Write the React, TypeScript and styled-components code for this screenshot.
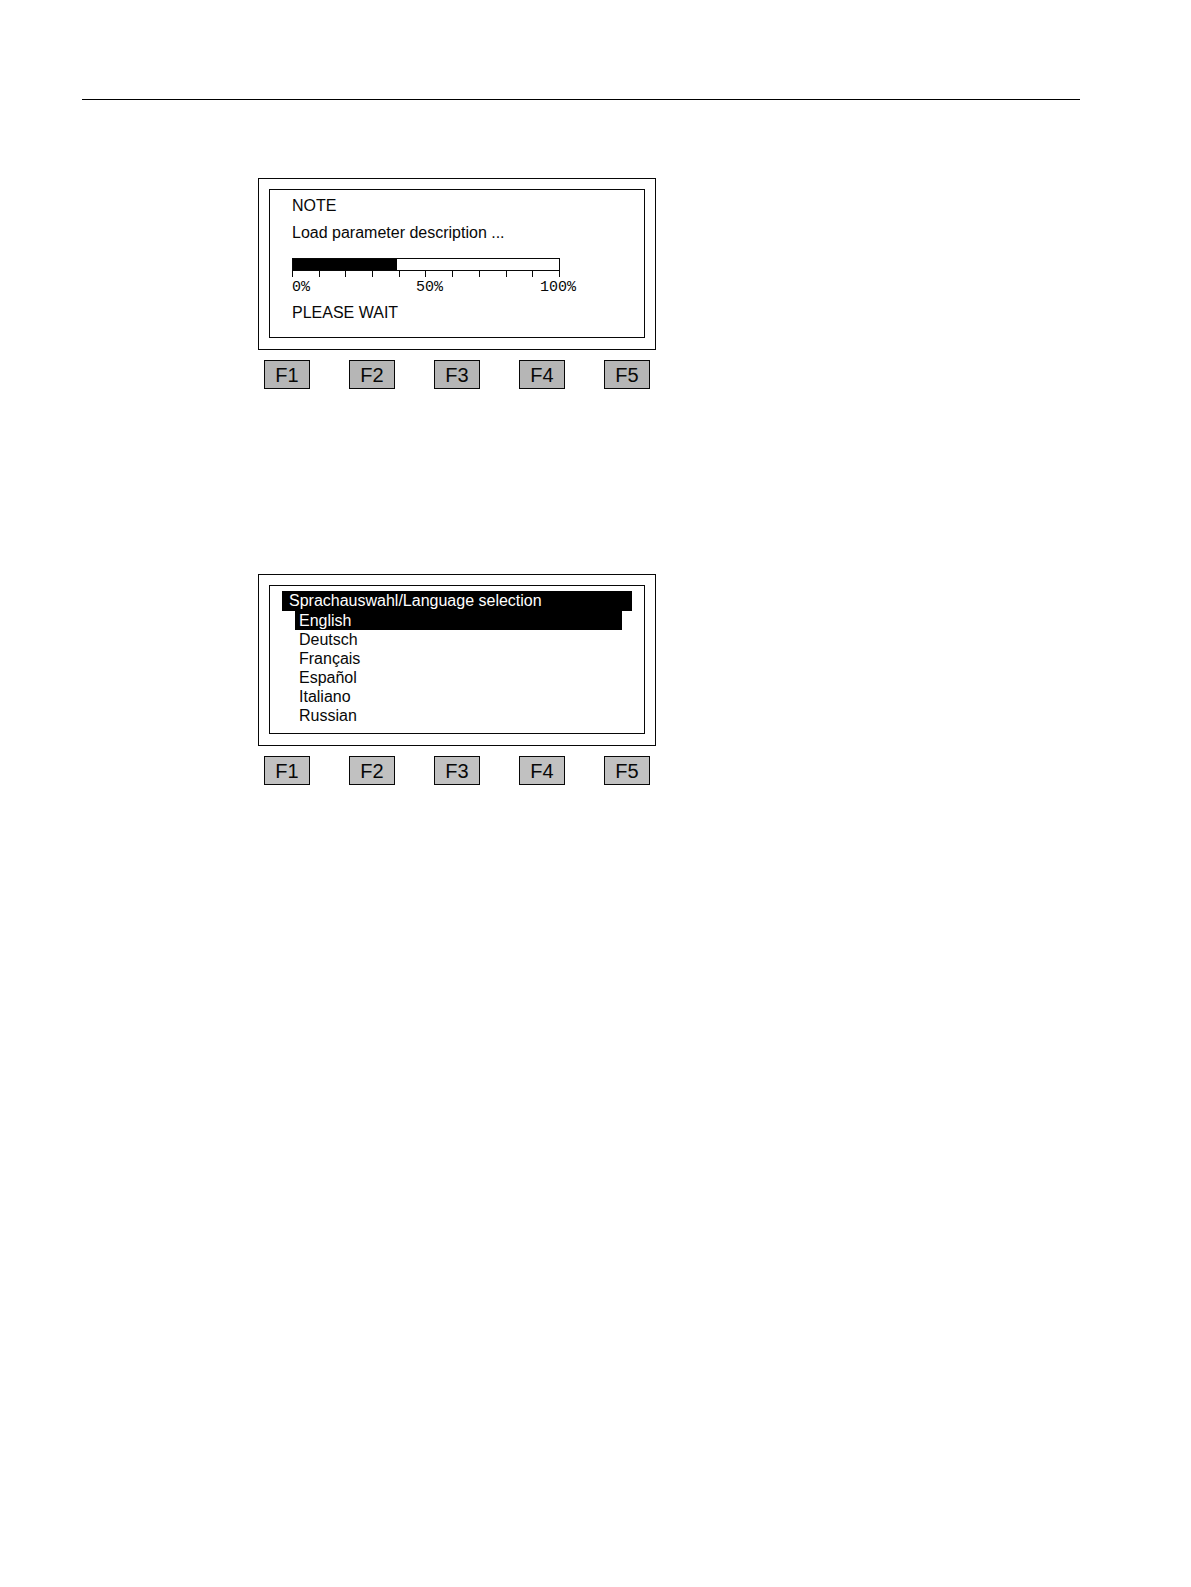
import React, { useState } from 'react';
import styled, { createGlobalStyle } from 'styled-components';

const ink = '#080808';

const GlobalStyle = createGlobalStyle`
  * { box-sizing: border-box; }
  body {
    margin: 0;
    background: #fff;
    color: ${ink};
    font: 16px/19px "Liberation Sans", Arial, sans-serif;
  }
`;

const Page = styled.main`
  min-height: 100vh;
  padding: 99px 111px 40px 82px;
`;

const Rule = styled.hr`
  height: 1px;
  margin: 0;
  border: 0;
  background: #000;
`;

const Figures = styled.div`
  display: flex;
  flex-direction: column;
  gap: 185px;
  max-width: 574px;
  padding: 78px 0 0 176px;
`;

const Terminal = styled.section`
  display: flex;
  flex-direction: column;
  gap: 10px;
`;

const Bezel = styled.div`
  padding: 10px 10px 11px;
  border: 1px solid ${ink};
`;

const Screen = styled.div`
  min-height: 149px;
  border: 1px solid ${ink};
`;

const NoteBody = styled(Screen)`
  display: flex;
  flex-direction: column;
  padding: 6px 22px;
`;

const Line = styled.p`
  margin: 0 0 8px;
`;

const Gauge = styled.div`
  width: 268px;
  margin-top: 8px;
`;

const Track = styled.div`
  height: 13px;
  border: 1px solid ${ink};
`;

const Fill = styled.div`
  height: 100%;
  background: #000;
`;

const Ticks = styled.div`
  display: flex;
  justify-content: space-between;
`;

const Tick = styled.span`
  width: 1px;
  height: 6px;
  background: ${ink};
`;

const Scale = styled.div`
  display: grid;
  grid-template-columns: repeat(3, 124px);
  margin: 1px 0 6px;
  font: 15px/19px "Liberation Mono", "Courier New", monospace;
`;

const MenuBody = styled(Screen)`
  padding: 5px 12px;
`;

const MenuTitle = styled.h2`
  margin: 0;
  padding: 0 7px;
  background: #000;
  color: #fff;
  font-size: 16px;
  font-weight: 400;
  line-height: 20px;
`;

const Options = styled.ul`
  margin: 0;
  padding: 0 10px 0 13px;
  list-style: none;
`;

const Option = styled.button<{ $selected: boolean }>`
  display: block;
  width: 100%;
  padding: 0 4px;
  border: 0;
  background: ${(p) => (p.$selected ? '#000' : 'transparent')};
  color: ${(p) => (p.$selected ? '#fff' : ink)};
  font: inherit;
  text-align: left;
  cursor: pointer;
`;

const Keys = styled.div`
  display: flex;
  justify-content: space-between;
  padding: 0 6px;
`;

const Key = styled.button<{ $shade: string }>`
  width: 46px;
  height: 29px;
  padding: 0;
  border: 1px solid ${ink};
  background: ${(p) => p.$shade};
  color: ${ink};
  font: 20px/26px "Liberation Sans", Arial, sans-serif;
  cursor: pointer;
`;

const keyNames = ['F1', 'F2', 'F3', 'F4', 'F5'];
const languages = ['English', 'Deutsch', 'Français', 'Español', 'Italiano', 'Russian'];

function FunctionKeys({ shade }: { shade: string }) {
  return (
    <Keys>
      {keyNames.map((name) => (
        <Key key={name} type="button" $shade={shade}>{name}</Key>
      ))}
    </Keys>
  );
}

function LoadProgress({ value }: { value: number }) {
  return (
    <>
      <Gauge
        role="progressbar"
        aria-label="Load parameter description"
        aria-valuemin={0}
        aria-valuemax={100}
        aria-valuenow={value}
      >
        <Track>
          <Fill style={{ width: `${value}%` }} />
        </Track>
        <Ticks>
          {Array.from({ length: 11 }, (_, i) => <Tick key={i} />)}
        </Ticks>
      </Gauge>
      <Scale>
        <span>0%</span>
        <span>50%</span>
        <span>100%</span>
      </Scale>
    </>
  );
}

export default function App() {
  const [language, setLanguage] = useState('English');

  return (
    <>
      <GlobalStyle />
      <Page>
        <Rule />
        <Figures>
          <Terminal>
            <Bezel>
              <NoteBody>
                <Line>NOTE</Line>
                <Line>Load parameter description ...</Line>
                <LoadProgress value={39} />
                <Line>PLEASE WAIT</Line>
              </NoteBody>
            </Bezel>
            <FunctionKeys shade="#b6b6b6" />
          </Terminal>
          <Terminal>
            <Bezel>
              <MenuBody>
                <MenuTitle>Sprachauswahl/Language selection</MenuTitle>
                <Options>
                  {languages.map((name) => (
                    <li key={name}>
                      <Option
                        type="button"
                        $selected={name === language}
                        aria-pressed={name === language}
                        onClick={() => setLanguage(name)}
                      >
                        {name}
                      </Option>
                    </li>
                  ))}
                </Options>
              </MenuBody>
            </Bezel>
            <FunctionKeys shade="#c1c1c1" />
          </Terminal>
        </Figures>
      </Page>
    </>
  );
}
